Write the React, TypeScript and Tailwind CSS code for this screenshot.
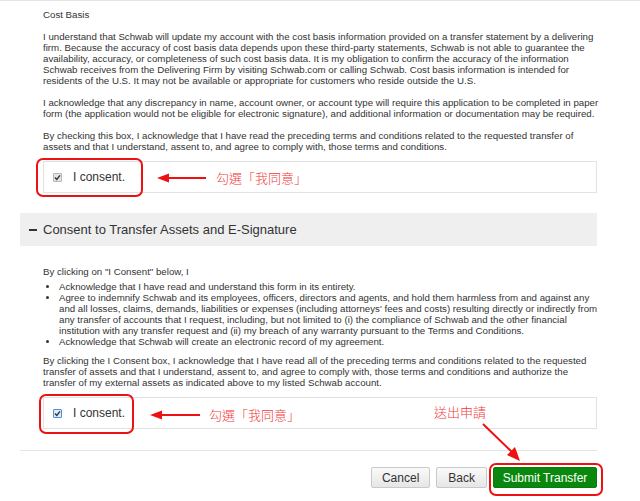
import React from 'react';

const body = "text-[9.7px] leading-[11px] text-[#333]";

const CheckMark: React.FC<{ tone: 'gray' | 'blue' }> = ({ tone }) => (
  <span
    className={`flex items-center justify-center w-[9px] h-[9px] rounded-[1px] border ${
      tone === 'blue' ? 'border-[#4a8fe0] bg-[#dfe9f7]' : 'border-[#b8b8b8] bg-[#e4e4e4]'
    }`}
  >
    <svg width="7" height="7" viewBox="0 0 7 7">
      <path d="M1 3.6 L2.8 5.4 L6 1.4" fill="none" stroke="#333" strokeWidth="1.4" />
    </svg>
  </span>
);

const ConsentBox: React.FC<{ tone: 'gray' | 'blue' }> = ({ tone }) => (
  <div className="h-[32px] border border-[#e2e2e2] flex items-center pl-[9px] gap-[11px]">
    <CheckMark tone={tone} />
    <span className="text-[12px] text-[#333]">I consent.</span>
  </div>
);

const Note: React.FC<{ className: string; children: React.ReactNode }> = ({ className, children }) => (
  <span
    className={`absolute text-[13px] leading-[14px] text-[#f03a3a] whitespace-nowrap ${className}`}
    style={{ fontFamily: '"Noto Sans CJK TC", "Noto Sans CJK SC", sans-serif', fontWeight: 300 }}
  >
    {children}
  </span>
);

export default function App() {
  return (
    <div
      className="relative w-[640px] h-[501px] overflow-hidden bg-white border-t border-[#e4e4e4]"
      style={{ fontFamily: '"Liberation Sans", Arial, sans-serif' }}
    >
      <div className="pl-[20px] pr-[43px]">
        {/* Cost basis */}
        <div className={`pl-[23px] pt-[8px] ${body}`}>
          <p>Cost Basis</p>
          <p className="mt-[11px] whitespace-nowrap">
            I understand that Schwab will update my account with the cost basis information provided on a transfer statement by a delivering<br />
            firm. Because the accuracy of cost basis data depends upon these third-party statements, Schwab is not able to guarantee the<br />
            availability, accuracy, or completeness of such cost basis data. It is my obligation to confirm the accuracy of the information<br />
            Schwab receives from the Delivering Firm by visiting Schwab.com or calling Schwab. Cost basis information is intended for<br />
            residents of the U.S. It may not be available or appropriate for customers who reside outside the U.S.
          </p>
          <p className="mt-[11px] whitespace-nowrap">
            I acknowledge that any discrepancy in name, account owner, or account type will require this application to be completed in paper<br />
            form (the application would not be eligible for electronic signature), and additional information or documentation may be required.
          </p>
          <p className="mt-[11px] whitespace-nowrap">
            By checking this box, I acknowledge that I have read the preceding terms and conditions related to the requested transfer of<br />
            assets and that I understand, assent to, and agree to comply with, those terms and conditions.
          </p>
          <div className="mt-[9px]">
            <ConsentBox tone="gray" />
          </div>
        </div>

        {/* Section header */}
        <div className="mt-[20px] h-[33px] bg-[#efefef] flex items-center">
          <span className="w-[23px] flex justify-center">
            <span className="block w-[8px] h-[2px] bg-[#333] ml-[2px]" />
          </span>
          <span className="text-[13px] text-[#333]">Consent to Transfer Assets and E-Signature</span>
        </div>

        {/* E-signature */}
        <div className={`pl-[23px] pt-[20px] ${body}`}>
          <p>By clicking on "I Consent" below, I</p>
          <ul className="mt-[4px] list-disc pl-[16px] whitespace-nowrap">
            <li>Acknowledge that I have read and understand this form in its entirety.</li>
            <li>
              Agree to indemnify Schwab and its employees, officers, directors and agents, and hold them harmless from and against any<br />
              and all losses, claims, demands, liabilities or expenses (including attorneys' fees and costs) resulting directly or indirectly from<br />
              any transfer of accounts that I request, including, but not limited to (i) the compliance of Schwab and the other financial<br />
              institution with any transfer request and (ii) my breach of any warranty pursuant to the Terms and Conditions.
            </li>
            <li>Acknowledge that Schwab will create an electronic record of my agreement.</li>
          </ul>
          <p className="mt-[8px] whitespace-nowrap">
            By clicking the I Consent box, I acknowledge that I have read all of the preceding terms and conditions related to the requested<br />
            transfer of assets and that I understand, assent to, and agree to comply with, those terms and conditions and authorize the<br />
            transfer of my external assets as indicated above to my listed Schwab account.
          </p>
          <div className="mt-[9px]">
            <ConsentBox tone="blue" />
          </div>
        </div>

        <div className="mt-[21px] border-t border-[#e4e4e4]" />

        {/* Actions */}
        <div className="mt-[16px] flex justify-end gap-[6px]">
          <button className="h-[21px] px-[10px] text-[12px] text-[#333] border border-[#c9c9c9] rounded-[2px] bg-gradient-to-b from-[#fafafa] to-[#e6e6e6]">
            Cancel
          </button>
          <button className="h-[21px] px-[11px] text-[12px] text-[#333] border border-[#c9c9c9] rounded-[2px] bg-gradient-to-b from-[#fafafa] to-[#e6e6e6]">
            Back
          </button>
          <button className="h-[21px] w-[104px] text-[12px] text-white bg-[#0a880e] border border-[#0a7a0d] rounded-[2px]">
            Submit Transfer
          </button>
        </div>
      </div>

      {/* Annotations */}
      <div className="absolute left-[36px] top-[157px] w-[107px] h-[39px] border-[2.5px] border-[#ee1111] rounded-[7px]" />
      <div className="absolute left-[39px] top-[393px] w-[95px] h-[40px] border-[2.5px] border-[#ee1111] rounded-[7px]" />
      <div className="absolute left-[489px] top-[462px] w-[114px] h-[33px] border-[2.5px] border-[#ee1111] rounded-[7px]" />

      <Note className="left-[216px] top-[170px]">勾選「我同意」</Note>
      <Note className="left-[209px] top-[407px]">勾選「我同意」</Note>
      <Note className="left-[434px] top-[404px]">送出申請</Note>

      <svg className="absolute left-0 top-0 pointer-events-none" width="640" height="501">
        <g fill="#ee1111" stroke="#ee1111">
          <line x1="167" y1="177" x2="206" y2="177" strokeWidth="2" />
          <polygon points="157,177 169,172.5 169,181.5" stroke="none" />
          <line x1="160" y1="414" x2="200" y2="414" strokeWidth="2" />
          <polygon points="150,414 162,409.5 162,418.5" stroke="none" />
          <line x1="483" y1="423" x2="513" y2="452" strokeWidth="2" />
          <polygon points="520,460 507,454 515,446" stroke="none" />
        </g>
      </svg>
    </div>
  );
}
